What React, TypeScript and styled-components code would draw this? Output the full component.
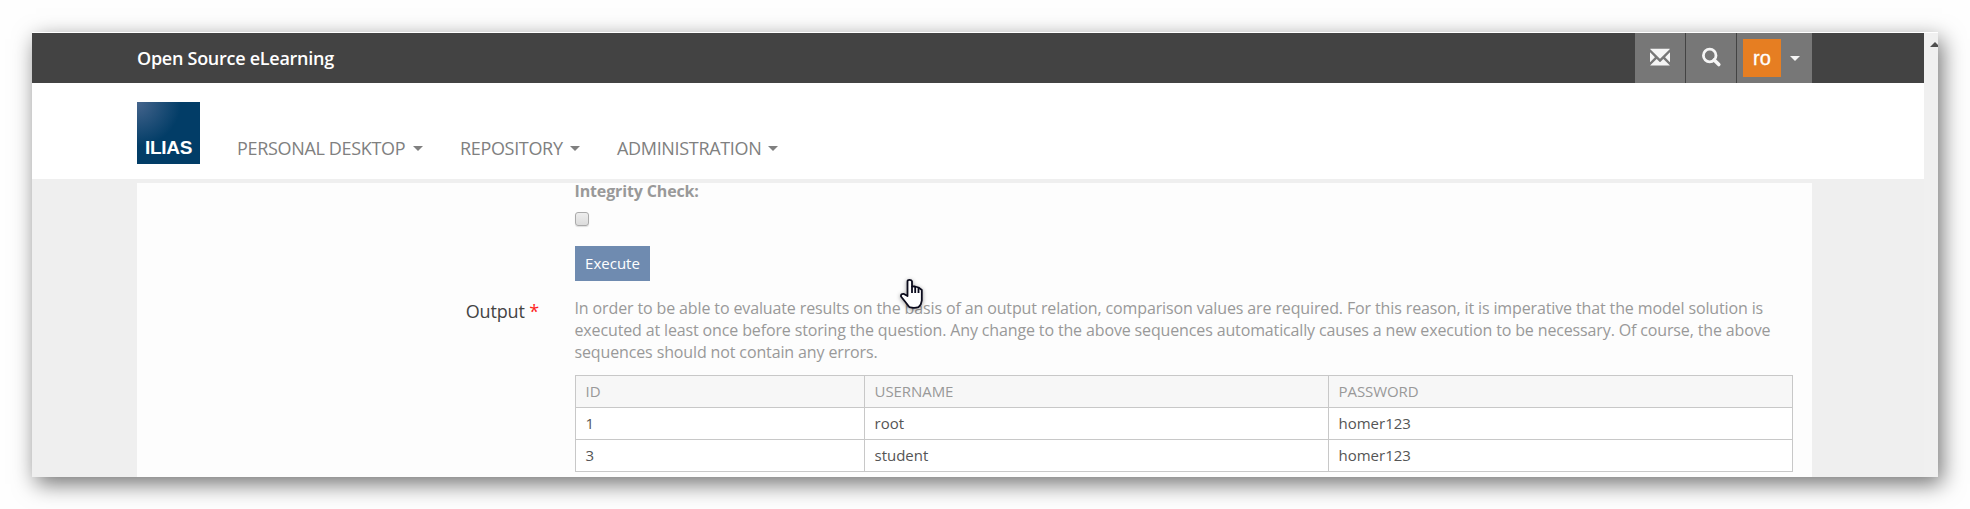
import React from "react";
import styled, { createGlobalStyle } from "styled-components";

const Global = createGlobalStyle`
  * { box-sizing: border-box; }
  body { margin: 0; background: #fefefe; font-family: "Open Sans", "Noto Sans", sans-serif; overflow: hidden; }
`;

const Stage = styled.div`
  height: 509px;
  padding: 32px;
`;
const Window = styled.div`
  display: flex;
  width: 1906px;
  height: 445px;
  border-top: 1px solid #fff;
  background: #f0f0f0;
  box-shadow: 4px 7px 21px rgba(0, 0, 0, 0.55);
`;
const Page = styled.div`
  width: 1892px;
  height: 444px;
  overflow: hidden;
  background: #efefef;
`;
const Scrollbar = styled.div`
  width: 14px;
  overflow: hidden;
  padding: 9px 0 0 6px;
  svg { display: block; }
`;
const TopBar = styled.header`
  display: flex;
  justify-content: space-between;
  height: 50px;
  padding: 0 112px 0 105px;
  background: #434343;
`;
const Title = styled.div`
  font-size: 18px;
  font-weight: 600;
  line-height: 50px;
  letter-spacing: -0.27px;
  color: #fff;
`;
const Tools = styled.div`
  display: flex;
  gap: 1px;
`;
const Tool = styled.div<{ $w: number }>`
  display: flex;
  align-items: center;
  width: ${(p) => p.$w}px;
  background: #777;
  color: #f5f5f5;
`;
const Avatar = styled.div`
  width: 38px;
  height: 38px;
  margin: 0 9px 0 6px;
  background: #e67e22;
  color: #fff;
  font: 20px/38px "Liberation Sans", sans-serif;
  -webkit-text-stroke: 0.3px #fff;
  text-align: center;
`;
const Caret = styled.span`
  display: inline-block;
  border: 5px solid transparent;
  border-top-color: currentColor;
  border-bottom: 0;
`;
const Header = styled.div`
  display: flex;
  height: 96px;
  padding: 19px 105px 0;
  background: #fff;
`;
const Logo = styled.div`
  width: 63px;
  height: 62px;
  padding-top: 36px;
  background: radial-gradient(circle at 0 0, #46658d 0, #023d67 44px);
  color: #fff;
  font: bold 19px/20px "Liberation Sans", sans-serif;
  text-align: center;
  letter-spacing: -0.3px;
`;
const Nav = styled.nav`
  display: flex;
  gap: 37px;
  padding: 34px 0 0 37px;
`;
const NavItem = styled.div<{ $w: number }>`
  display: flex;
  align-items: center;
  justify-content: space-between;
  width: ${(p) => p.$w}px;
  height: 25px;
  font-size: 18px;
  letter-spacing: -0.33px;
  white-space: nowrap;
  color: #808080;
`;
const NavText = styled.span`
  padding-bottom: 2px;
`;
const Content = styled.main`
  display: grid;
  grid-template-columns: 402px 1218px;
  column-gap: 35px;
  align-items: start;
  width: 1675px;
  height: 300px;
  margin: 4px 0 0 105px;
  background: #fdfdfd;
`;
const Label = styled.div`
  padding-top: 116px;
  font-size: 18px;
  line-height: 25px;
  letter-spacing: -0.15px;
  text-align: right;
  color: #444;
`;
const Star = styled.span`
  color: #f22;
`;
const Field = styled.div`
  display: flex;
  flex-direction: column;
  align-items: flex-start;
`;
const CheckLabel = styled.div`
  padding-left: 0.5px;
  font-size: 16px;
  font-weight: 700;
  line-height: 16px;
  letter-spacing: -0.14px;
  color: #999;
`;
const Check = styled.span`
  width: 14px;
  height: 14px;
  margin: 13px 0 20px 1px;
  border: 1px solid #aaa;
  border-radius: 3px;
  background: linear-gradient(#eee, #dcdcdc);
  box-shadow: 0 1px 1px rgba(0, 0, 0, 0.12);
`;
const Button = styled.button`
  width: 75px;
  height: 35px;
  margin: 0 0 16px 1px;
  padding: 0;
  border: 0;
  background: #6f8bb0;
  color: #fff;
  font: 15px/35px "Open Sans", sans-serif;
`;
const Info = styled.p`
  margin: 0 0 12px;
  padding-left: 0.5px;
  font-size: 16px;
  line-height: 22px;
  white-space: nowrap;
  color: #999;
`;
const Line = styled.span<{ $track: number }>`
  display: block;
  letter-spacing: ${(p) => p.$track}px;
`;
const Table = styled.table`
  width: 1218px;
  margin-left: 1px;
  table-layout: fixed;
  border-collapse: collapse;
  font-size: 15px;
  th, td {
    height: 32px;
    padding: 0 10px 2px 9.5px;
    border: 1px solid #c8c8c8;
    background: #fff;
    color: #555;
    font-weight: 400;
    line-height: 20px;
    text-align: left;
  }
  th { background: #f7f7f7; color: #999; letter-spacing: -0.06px; }
`;
const Pointer = styled.svg`
  position: absolute;
  left: 896px;
  top: 273px;
  filter: drop-shadow(0 1px 2px rgba(0, 0, 0, 0.4));
`;

const navItems: [string, number][] = [
  ["PERSONAL DESKTOP", 186],
  ["REPOSITORY", 120],
  ["ADMINISTRATION", 161],
];
const rows = [
  ["1", "root", "homer123"],
  ["3", "student", "homer123"],
];

export default function App() {
  return (
    <Stage>
      <Global />
      <Window>
        <Page>
          <TopBar>
            <Title>Open Source eLearning</Title>
            <Tools>
              <Tool $w={50}>
                <svg width="50" height="50" viewBox="0 0 50 50" fill="currentColor">
                  <path
                    transform="translate(15 34.2) scale(.01667 -.01667)"
                    d="M25 1100h1150q10 0 12.5 -5t-5.5 -13l-564 -567q-8 -8 -18 -8t-18 8l-564 567q-8 8 -5.5 13t12.5 5zM18 882l264 -264q8 -8 8 -18t-8 -18l-264 -264q-8 -8 -13 -5.5t-5 12.5v550q0 10 5 12.5t13 -5.5zM918 618l264 264q8 8 13 5.5t5 -12.5v-550q0 -10 -5 -12.5t-13 5.5l-264 264q-8 8 -8 18t8 18zM818 482l364 -364q8 -8 5.5 -13t-12.5 -5h-1150q-10 0 -12.5 5t5.5 13l364 364q8 8 18 8t18 -8l164 -164q8 -8 18 -8t18 8l164 164q8 8 18 8t18 -8z"
                  />
                </svg>
              </Tool>
              <Tool $w={50}>
                <svg width="50" height="50" viewBox="0 0 50 50" fill="none" stroke="currentColor">
                  <circle cx="23.7" cy="22.5" r="6.3" strokeWidth="2.8" />
                  <path d="M28.2 27l4.6 4.6" strokeWidth="3.6" strokeLinecap="round" />
                </svg>
              </Tool>
              <Tool $w={75}>
                <Avatar>ro</Avatar>
                <Caret />
              </Tool>
            </Tools>
          </TopBar>
          <Header>
            <Logo>ILIAS</Logo>
            <Nav>
              {navItems.map(([name, w]) => (
                <NavItem key={name} $w={w}>
                  <NavText>{name}</NavText>
                  <Caret />
                </NavItem>
              ))}
            </Nav>
          </Header>
          <Content>
            <Label>
              Output <Star>*</Star>
            </Label>
            <Field>
              <CheckLabel>Integrity Check:</CheckLabel>
              <Check />
              <Button>Execute</Button>
              <Info>
                <Line $track={-0.127}>
                  In order to be able to evaluate results on the basis of an output relation, comparison values are required. For this reason, it is imperative that the model solution is
                </Line>
                <Line $track={-0.138}>
                  executed at least once before storing the question. Any change to the above sequences automatically causes a new execution to be necessary. Of course, the above
                </Line>
                <Line $track={-0.13}>sequences should not contain any errors.</Line>
              </Info>
              <Table>
                <colgroup>
                  <col style={{ width: 289 }} />
                  <col style={{ width: 464 }} />
                  <col />
                </colgroup>
                <thead>
                  <tr>
                    <th>ID</th>
                    <th>USERNAME</th>
                    <th>PASSWORD</th>
                  </tr>
                </thead>
                <tbody>
                  {rows.map((r) => (
                    <tr key={r[0]}>
                      {r.map((c, i) => (
                        <td key={i}>{c}</td>
                      ))}
                    </tr>
                  ))}
                </tbody>
              </Table>
            </Field>
          </Content>
        </Page>
        <Scrollbar>
          <svg width="10" height="5" viewBox="0 0 10 5" fill="#505050">
            <path d="M0 5L5 0l5 5z" />
          </svg>
        </Scrollbar>
      </Window>
      <Pointer width="32" height="40" viewBox="0 0 32 40" fill="#fff" stroke="#0b0b1c" strokeWidth="1.8" strokeLinejoin="round">
        <path d="M11.5 23V8.3Q11.5 6.8 13.5 6.8T16 8.3V13.3L19 13.5 22.5 14.5 25.8 17V27.5Q25.5 31.5 22.5 34.2 18 35.7 13.5 34.2L9 28.5 5 23.5Q4.7 20.8 7.5 20.8z" />
        <path d="M16 13v7M19.2 13.5v6.5M22.5 14.5v5.5" />
      </Pointer>
    </Stage>
  );
}
